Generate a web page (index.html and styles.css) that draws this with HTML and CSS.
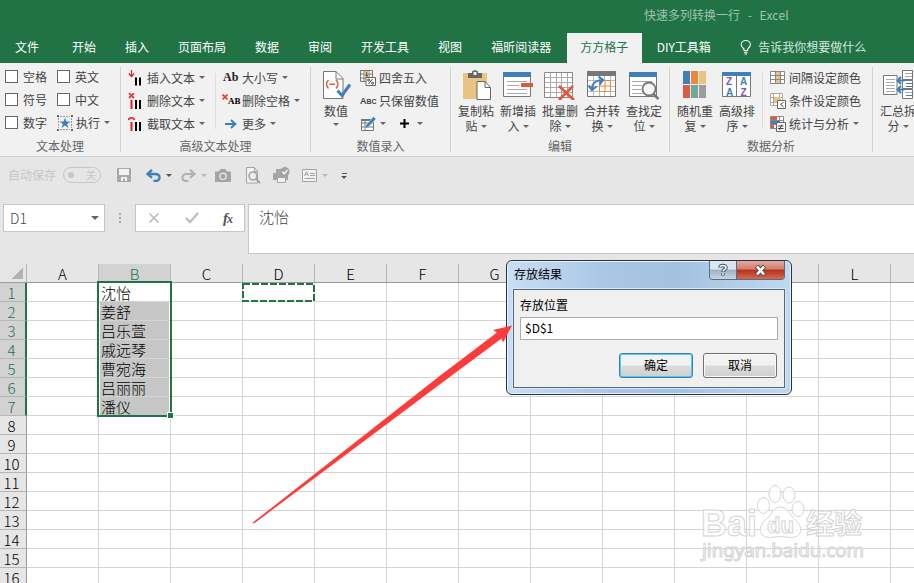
FILE: index.html
```html
<!DOCTYPE html>
<html lang="zh-CN">
<head>
<meta charset="utf-8">
<title>快速多列转换一行 - Excel</title>
<link rel="stylesheet" href="styles.css">
</head>
<body>
<div class="app">
  <header class="title">快速多列转换一行 - <span>Excel</span></header>
  <nav class="tabs">
    <a class="file">文件</a><a>开始</a><a>插入</a><a>页面布局</a><a>数据</a><a>审阅</a><a>开发工具</a><a>视图</a><a>福昕阅读器</a><a class="on">方方格子</a><a>DIY工具箱</a>
    <span class="tell"><svg width="12" height="15" viewBox="0 0 12 15" fill="none" stroke="#fff" stroke-width="1.1"><path d="M4 10.5V9C2 7.500 1.200 6.500 1.200 4.800a4.600 4.300 0 0 1 9.200 0C10.400 6.500 9.600 7.500 7.600 9v1.500zM4 12.200h3.600M4.500 14h2.600"/></svg>告诉我你想要做什么</span>
  </nav>

  <section class="ribbon">
    <div class="group g1">
      <div class="body">
        <div class="checks">
          <span><i class="box"></i>空格</span><span><i class="box"></i>英文</span>
          <span><i class="box"></i>符号</span><span><i class="box"></i>中文</span>
          <span><i class="box"></i>数字</span>
          <span class="run"><svg width="16" height="16" viewBox="0 0 16 16"><path d="M3 1.500h10M3 14.500h10M1.500 3v10M14.500 3v10" stroke="#999" stroke-dasharray="2 1"/><path d="M0 0h2v2H0zM14 0h2v2h-2zM0 14h2v2H0zM14 14h2v2h-2z" fill="#666"/><path d="M8 2.800l1.400 3.700 4 .1-3.200 2.400 1.200 3.900L8 10.600l-3.400 2.300 1.200-3.900L2.600 6.600l4-.1z" fill="#4080ba"/></svg>执行<i class="car"></i></span>
        </div>
      </div>
      <div class="name">文本处理</div>
    </div>

    <div class="group g2">
      <div class="body">
        <div class="list wide">
          <span><svg width="16" height="16" viewBox="0 0 16 16"><path d="M3.500 0v6M.8 3.500l2.700 3 2.700-3" stroke="#e81c24" fill="none" stroke-width="1.200"/><path d="M7 7.500h2v8H7zM11 7.500h2v8h-2z"/></svg>插入文本<i class="car"></i></span>
          <span><svg width="16" height="16" viewBox="0 0 16 16"><path d="M1 0l5 5M6 0L1 5" stroke="#e84030" stroke-width="1.800"/><path d="M2.500 7h2v9h-2z" fill="#e81c24"/><path d="M7 7h2v9H7zM11 7h2v9h-2z"/></svg>删除文本<i class="car"></i></span>
          <span><svg width="16" height="16" viewBox="0 0 16 16"><path d="M.5 4C1 1 6 1 6.500 4" stroke="#e81c24" fill="none" stroke-width="1.600"/><path d="M2.500 6h2v9h-2z" fill="#e81c24"/><path d="M7 6h2v9H7zM11 6h2v9h-2z"/></svg>截取文本<i class="car"></i></span>
        </div>
        <div class="list ruled case">
          <span><b class="ab">Ab</b>大小写<i class="car"></i></span>
          <span><b class="ab small"><svg width="6" height="6" viewBox="0 0 6 6"><path d="M.5.500l5 5M5.500.500l-5 5" stroke="#e84030" stroke-width="1.700"/></svg>AB</b>删除空格<i class="car"></i></span>
          <span><svg width="16" height="16" viewBox="0 0 16 16" fill="none" stroke="#4080ba" stroke-width="2"><path d="M2 8h10M8 4l4.300 4L8 12"/></svg>更多<i class="car"></i></span>
        </div>
      </div>
      <div class="name">高级文本处理</div>
    </div>

    <div class="group g3">
      <div class="body">
        <div class="big">
          <svg width="30" height="30" viewBox="0 0 30 30" fill="none"><path d="M2.500 1.500H15l7 7v20H2.500z" fill="#fff" stroke="#777"/><path d="M15 1.500V9h7" stroke="#777"/><path d="M7.500 10c-2.500 2.500-2.500 6 0 8.500M15 10c2.500 2.500 2.500 6 0 8.500M8.500 14.300h5.500" stroke="#e0583e" stroke-width="1.600"/><path d="M16.500 20.500l4.500 5 8-11" stroke="#4080ba" stroke-width="3"/></svg>
          <span>数值</span><i class="car"></i>
        </div>
        <div class="list nums">
          <span><svg width="16" height="16" viewBox="0 0 16 16"><path d="M.5.500h12v11H.5zM.5 4h12M.5 8h12M4 .5v11M9 .5v11" stroke="#777" fill="#fff"/><path d="M4.500 1H9v7H4.500z" fill="#eac282"/><path d="M6.700 2v4M5.200 4.500l1.500 2 1.500-2" stroke="#555" fill="none"/><path d="M6 7.500h9.500v8H6z" fill="#fff" stroke="#666"/><path d="M12.500 9l-4 5" stroke="#444"/><circle cx="8.700" cy="10" r="1" fill="none" stroke="#444"/><circle cx="12.600" cy="13.200" r="1" fill="none" stroke="#444"/></svg>四舍五入</span>
          <span><b class="abc">A<small>BC</small></b>只保留数值</span>
          <span><svg width="16" height="16" viewBox="0 0 16 16"><path d="M1.500 3.500h12v11h-12zM1.500 7h12M1.500 11h12M5 3.500v11" stroke="#777" fill="#fff"/><path d="M1 3h9v2H1z" fill="#777"/><path d="M13.500.5L16 3l-8 8.500-3.500 1.300L6 9z" fill="#4080ba" stroke="#f1f1f1" stroke-width=".5"/></svg><i class="car"></i><svg class="plus" width="9" height="9" viewBox="0 0 9 9"><path d="M0 4.500h9M4.500 0v9" stroke="#000" stroke-width="2"/></svg><i class="car"></i></span>
        </div>
      </div>
      <div class="name">数值录入</div>
    </div>

    <div class="group g4">
      <div class="body">
        <div class="big"><svg width="30" height="30" viewBox="0 0 30 30"><path d="M2 3h24v26H2z" fill="#eac282"/><path d="M7 3h4V1.500Q14 -1 17 1.500V3h4v5H7z" fill="#666"/><path d="M12.500 2h3v3h-3z" fill="#f1f1f1"/><path d="M16 11.500h8l5.500 6v12H16z" fill="#fff" stroke="#666"/><path d="M24 11.500v6h5.500" fill="none" stroke="#666"/></svg><span>复制粘</span><span>贴<i class="car"></i></span></div>
        <div class="big"><svg width="30" height="30" viewBox="0 0 30 30"><path d="M.5 3.500h27v23H.5z" fill="#fff" stroke="#777"/><path d="M0 2h28v5H0z" fill="#4080ba"/><path d="M4 11.500h20M4 15.500h12M4 19.500h20M4 23.500h20" stroke="#aaa"/><path d="M18 13h12v4H18z" fill="#e0583e"/></svg><span>新增插</span><span>入<i class="car"></i></span></div>
        <div class="big"><svg width="32" height="30" viewBox="0 0 32 30"><path d="M.5 2.500h28v25H.5z" fill="#fff" stroke="#888"/><path d="M1 7.500h27M1 12.500h27M1 17.500h27M1 22.500h27M6.500 3v24M12.500 3v24M17.500 3v24M23.500 3v24" stroke="#aaa"/><path d="M15 16l15 14M29 16L15 30" stroke="#e0583e" stroke-width="2.800"/></svg><span>批量删</span><span>除<i class="car"></i></span></div>
        <div class="big"><svg width="30" height="30" viewBox="0 0 30 30"><path d="M.5 1.500h28v25H.5z" fill="#fff" stroke="#777"/><path d="M0 1h29v5H0z" fill="#777"/><path d="M1 10.500h27M1 16.500h27M1 21.500h27M6.500 6v20M12.500 6v20M17.500 6v20M23.500 6v20" stroke="#bbb"/><path d="M12.500 10.500h11v11h-11zM12.500 16h11M18 10.500v11" fill="#fff" stroke="#e58a3c"/><path d="M5 19C5 13 8 10.500 15 10M11.500 6.500l4.500 3.500-3.500 4.500M1.500 15.500L5 20l4.500-3.500" stroke="#4080ba" stroke-width="2.200" fill="none"/></svg><span>合并转</span><span>换<i class="car"></i></span></div>
        <div class="big"><svg width="30" height="30" viewBox="0 0 30 30"><path d="M.5 3.500h27v23H.5z" fill="#fff" stroke="#777"/><path d="M0 2h28v5H0z" fill="#4080ba"/><path d="M3 11.500h20M3 15.500h10M3 19.500h9M3 23.500h11" stroke="#aaa"/><circle cx="20" cy="19" r="6.500" fill="#f5f5f5" stroke="#777" stroke-width="1.800"/><path d="M24.500 24l5 5" stroke="#777" stroke-width="2.600"/></svg><span>查找定</span><span>位<i class="car"></i></span></div>
      </div>
      <div class="name">编辑</div>
    </div>

    <div class="group g5">
      <div class="body">
        <div class="big"><svg width="24" height="30" viewBox="0 0 24 30"><path d="M0 1h7v13H0z" fill="#4080ba"/><path d="M8 1h7v13H8z" fill="#e58a3c"/><path d="M16 1h7v13h-7z" fill="#eac282"/><path d="M0 15h7v13H0z" fill="#d95c45"/><path d="M8 15h7v13H8z" fill="#73a695"/><path d="M16 15h7v13h-7z" fill="#9c9c9c"/></svg><span>随机重</span><span>复<i class="car"></i></span></div>
        <div class="big"><svg width="30" height="30" viewBox="0 0 30 30"><path d="M.5 3.500h28v23H.5zM14.500 6v21" fill="#fff" stroke="#777"/><path d="M0 2h29v4H0z" fill="#4080ba"/><g class="az"><text x="4" y="15" fill="#8356a8">Z</text><text x="18" y="15" fill="#4080ba">A</text><text x="4" y="25.500" fill="#4080ba">A</text><text x="18.500" y="25.500" fill="#8356a8">Z</text></g></svg><span>高级排</span><span>序<i class="car"></i></span></div>
        <div class="list ruled analyze">
          <span><svg width="16" height="16" viewBox="0 0 16 16"><path d="M.5 1.500h14v12H.5z" fill="#fff"/><path d="M5 2h5v3.500H5zM5 9.500h5V13H5zM5 5.500h5v4H5z" fill="#eac282"/><path d="M.5 1.500h14v12H.5zM.5 5.500h14M.5 9.500h14M5.500 1.500v12M10.500 1.500v12" stroke="#888" fill="none"/></svg>间隔设定颜色</span>
          <span><svg width="16" height="16" viewBox="0 0 16 16"><path d="M.5.500h12v12H.5zM.5 4.500h12M.5 9.500h12M3.500.500v12M9.500.500v12" stroke="#aaa" fill="#fff"/><path d="M4 4h7v5.500H4z" fill="#eac282"/><path d="M7.500 7.500h8v8h-8z" fill="#fff" stroke="#666"/><path d="M13.500 9.300L10.500 11.500l3 2.200" stroke="#444" fill="none"/></svg>条件设定颜色</span>
          <span><svg width="16" height="16" viewBox="0 0 16 16"><path d="M.5.500h13v12H.5zM.5 4.500h13M.5 8.500h13M9.500.500v12" stroke="#888" fill="#fff"/><path d="M1 1h6v3H1zM1 9h3v3H1z" fill="#e0583e"/><path d="M1 5h9v3H1z" fill="#4080ba"/><path d="M6.500 6.500h9v9h-9z" fill="#fff" stroke="#666"/><path d="M8 10h5.500M8 12.500h5.500M12 8.500l-2.500 5.500" stroke="#444"/></svg>统计与分析<i class="car"></i></span>
        </div>
      </div>
      <div class="name">数据分析</div>
    </div>

    <div class="group g6">
      <div class="body">
        <div class="big"><svg width="30" height="30" viewBox="0 0 30 30"><path d="M.5 5.500H14v19H.5zM19.500.5h10v9h-10zM19.500 10.500h10v8h-10zM19.500 19.500h10v9h-10z" fill="#fff" stroke="#777"/><path d="M3 9.500h9M3 12.500h9M3 15.500h9M3 18.500h9M3 21.500h9M22 3.500h7M22 6.500h7M22 22.500h7" stroke="#aaa"/><path d="M23 13.500h6M23 16.500h6M23 25.500h6" stroke="#4080ba"/><path d="M14.500 10.500h7M18 7l-3.500 3.500L18 14M14.500 19.500h7M18 16l-3.500 3.500L18 23" stroke="#4080ba" stroke-width="2" fill="none"/></svg><span>汇总拆</span><span>分<i class="car"></i></span></div>
      </div>
    </div>
  </section>

  <section class="qat">
    <span class="auto">自动保存</span><span class="toggle"><i></i>关</span>
    <svg class="save" width="14" height="14" viewBox="0 0 14 14"><path d="M0 0h14v14H0z" fill="#a9a7aa"/><path d="M2 1h10v6H2zM4 9h6v4H8v-2.500H6V13H4z" fill="#f3f1f4"/></svg>
    <svg class="undo" width="15" height="13" viewBox="0 0 15 13" fill="none" stroke="#4080ba" stroke-width="2.300"><path d="M6 .8L1.500 5 6 8.800M2 5h7c6 0 6 7 .5 7H7.500"/></svg><i class="car dark"></i>
    <svg class="redo" width="15" height="13" viewBox="0 0 15 13" fill="none" stroke="#b0b0b0" stroke-width="2.100"><path d="M9 .8L13.500 5 9 8.800M13 5H6c-6 0-6 7-.5 7h2"/></svg><i class="car pale"></i>
    <svg class="camera" width="16" height="13" viewBox="0 0 16 13"><path d="M0 2.500h4L5.500 0h5L12 2.500h4V13H0z" fill="#a5a3a6"/><circle cx="8" cy="7.300" r="3.200" fill="none" stroke="#eee" stroke-width="1.200"/></svg>
    <svg class="preview" width="15" height="17" viewBox="0 0 15 17" fill="none" stroke="#a5a3a6"><path d="M.5.500h8l3 3.500v12H.5z" fill="#f3f1f4"/><path d="M8.500.500v4h3"/><circle cx="7" cy="9" r="4" fill="#eee" stroke-width="1.600"/><path d="M10 12l4 4" stroke-width="2"/></svg>
    <svg class="print" width="17" height="16" viewBox="0 0 17 16"><path d="M0 6h15v7H0zM3 2h6v4H3z" fill="#a5a3a6"/><path d="M4.500 10.500h8v5h-8z" fill="#f3f1f4" stroke="#a5a3a6"/><circle cx="11.800" cy="4.800" r="4.800" fill="#a5a3a6"/><path d="M9.300 4.800l2 2 3.200-4" fill="none" stroke="#fff" stroke-width="1.300"/></svg>
    <svg class="form" width="15" height="13" viewBox="0 0 15 13"><path d="M.5.500h14v12H.5z" fill="#f3f1f4" stroke="#a5a3a6"/><path d="M2.500 7l2-4.500 2 4.500M3.300 5.500h2.400M8 4.500h5M8 6.500h5M2.500 9.500h10.500" fill="none" stroke="#a5a3a6"/></svg><i class="car pale"></i>
    <span class="more"><i class="car dark"></i></span>
  </section>

  <section class="formula">
    <div class="namebox">D1<i class="car"></i></div>
    <div class="dots"><i></i><i></i><i></i></div>
    <div class="fxbox">
      <svg width="12" height="12" viewBox="0 0 12 12"><path d="M1.500 1.500l9 9M10.500 1.500l-9 9" stroke="#bcbcbc" stroke-width="1.700"/></svg>
      <svg width="14" height="12" viewBox="0 0 14 12"><path d="M1 6l4 4.200L13 1" stroke="#bcbcbc" stroke-width="2.200" fill="none"/></svg>
      <em>f<small>x</small></em>
    </div>
    <div class="input">沈怡</div>
  </section>

  <main class="sheet">
    <div class="row head"><b class="corner"></b><b>A</b><b class="sel">B</b><b>C</b><b>D</b><b>E</b><b>F</b><b>G</b><b>H</b><b>I</b><b>J</b><b>K</b><b>L</b><b></b></div>
    <div class="row on"><b>1</b><span class="first">沈怡</span></div>
    <div class="row on"><b>2</b><span>姜舒</span></div>
    <div class="row on"><b>3</b><span>吕乐萱</span></div>
    <div class="row on"><b>4</b><span>戚远琴</span></div>
    <div class="row on"><b>5</b><span>曹宛海</span></div>
    <div class="row on"><b>6</b><span>吕丽丽</span></div>
    <div class="row on"><b>7</b><span>潘仪</span></div>
    <div class="row"><b>8</b></div>
    <div class="row"><b>9</b></div>
    <div class="row"><b>10</b></div>
    <div class="row"><b>11</b></div>
    <div class="row"><b>12</b></div>
    <div class="row"><b>13</b></div>
    <div class="row"><b>14</b></div>
    <div class="row"><b>15</b></div>
    <div class="row"><b>16</b></div>
    <div class="selection"><i></i></div>
    <svg class="ants" width="73" height="19" viewBox="0 0 73 19"><rect x="1" y="1" width="71" height="17" fill="none" stroke="#217346" stroke-width="2" stroke-dasharray="7 2"/></svg>
  </main>

  <svg class="watermark" width="170" height="85" viewBox="0 0 170 85" fill="#fff" fill-opacity=".75" stroke="#d4d4d4" stroke-width="1">
    <ellipse cx="66.500" cy="25.500" rx="6" ry="8"/><ellipse cx="78" cy="14" rx="6" ry="8.500"/><ellipse cx="92" cy="15" rx="6" ry="8"/><ellipse cx="101" cy="29" rx="6" ry="7.500"/>
    <path d="M83.500 27c7 0 9 8 15 13 8 7 7 17-4 17.500-5 0-7-1-11-1s-7 1-11 1c-11-.5-12-10.500-4-17.500 6-5 8-13 15-13z"/>
    <text x="4" y="56" class="wm-logo" textLength="56" lengthAdjust="spacingAndGlyphs">Bai</text>
    <text x="70" y="53" class="wm-du" textLength="27" lengthAdjust="spacingAndGlyphs">du</text>
    <text x="109" y="54" class="wm-cn">经验</text>
    <text x="5" y="77" class="wm-url" textLength="162" lengthAdjust="spacingAndGlyphs">jingyan.baidu.com</text>
  </svg>

  <div class="dialog">
    <div class="bar">存放结果<span class="caps"><i class="help"><svg width="12" height="14" viewBox="0 0 12 14" fill="none"><path d="M3 4.800C3 1.800 9 1.800 9 4.800 9 6.600 6 6.600 6 9M6 10.500v2" stroke="#46566a" stroke-width="3.600"/><path d="M3 4.300C3 1.800 9 1.800 9 4.800 9 6.600 6 6.600 6 8.500M6 10.500v1.500" stroke="#fff" stroke-width="1.600"/></svg></i><i class="close"><svg width="13" height="11" viewBox="0 0 13 11"><path d="M2.500 1l8 9M10.500 1l-8 9" stroke="#594c58" stroke-width="4.600"/><path d="M3 1.500l7 8M10 1.500l-7 8" stroke="#fff" stroke-width="2.600"/></svg></i></span></div>
    <div class="pane">
      <label>存放位置</label>
      <div class="field">$D$1</div>
      <div class="buttons"><button class="ok">确定</button><button>取消</button></div>
    </div>
  </div>

  <svg class="arrow" width="264" height="202" viewBox="0 0 264 202"><path d="M1.500 200.800L188 54.500 246 10.500 242 8 261 3.500 252 20.500 250.500 16.500 190 61.500 3 201.500z" fill="#fc3c3a"/></svg>
</div>
</body>
</html>
```
FILE: styles.css
```css
* { box-sizing: border-box; }
body { margin: 0; overflow: hidden; font: 12px/16px "Noto Sans CJK SC", sans-serif; color: #444; }
i, em { font-style: normal; }
svg { display: block; flex: none; }
.app { position: relative; width: 914px; height: 583px; overflow: hidden; background: #e6e6e6; }

.title { height: 33px; padding: 7px 0 0 644px; background: #217346; color: #9fc5af; white-space: pre; word-spacing: 5px; }
.title span { letter-spacing: .2px; }
.tabs { display: flex; height: 30px; padding-left: .5px; background: #217346; color: #fff; white-space: nowrap; }
.tabs a { margin: 0 1px; padding: 6px 13.500px 0; }
.tabs .file { margin-right: 5px; }
.tabs .on { background: #f1f1f1; color: #217346; margin: 0 0 0 1px; padding: 6px 14px 0 13.500px; }
.tell { display: flex; gap: 6px; align-items: center; padding: 0 0 2px 15px; color: #d6e7dd; }

.ribbon { display: flex; height: 94px; background: #f1f1f1; border-bottom: 1px solid #d2d2d2; white-space: nowrap; overflow: hidden; }
.group { flex: none; height: 85px; margin-top: 4px; border-right: 1px solid #d2d2d2; }
.group .body { display: flex; height: 71px; }
.name { text-align: center; line-height: 16px; color: #666; }
.g1 { width: 121px; } .g2 { width: 190px; } .g3 { width: 140px; } .g4 { width: 219px; } .g5 { width: 203px; } .g6 { width: 60px; }
.car { flex: none; display: inline-block; width: 0; height: 0; border: 3px solid transparent; border-top-color: #666; border-bottom: 0; }
.checks { display: grid; grid-template-columns: 52px 60px; grid-auto-rows: 23px; padding-left: 5px; margin-top: -2px; }
.checks span, .list span { display: flex; align-items: center; }
.box { width: 13px; height: 13px; border: 1px solid #666; background: #fff; margin-right: 5px; }
.run svg { margin-right: 3px; }
.run .car, .list .car { margin-left: 4px; }
.list { display: grid; grid-auto-rows: 23px; margin-top: -1px; height: 70px; }
.list svg { margin-right: 3px; }
.wide { width: 94px; padding-left: 7px; }
.ruled { border-left: 1px solid #dcdcdc; height: 56px; margin-top: 6px; }
.ruled span { position: relative; top: -7px; }
.case { padding-left: 7px; }
.ab { width: 19px; font: bold 12px "Liberation Serif", serif; color: #222; }
.case .small { display: flex; font-size: 9px; color: #000; }
.small svg { margin: -2px 0 0 -1px; }
.abc { width: 19px; font: bold 9px "Liberation Sans", sans-serif; }
.abc small { font-size: 7px; }
.az { font: bold 10px "Liberation Sans", sans-serif; }
.big { width: 42px; display: flex; flex-direction: column; align-items: center; line-height: 15px; padding-top: 3px; }
.big svg { margin-bottom: 3px; }
.big .car { margin-left: 3px; vertical-align: 3px; }
.g3 .big { margin-left: 5px; width: 40px; }
.g3 .big .car { margin: 5px 0 0; }
.nums { padding-left: 4px; }
.nums .plus { margin: 0 7px 0 14px; }
.nums svg + .car { margin-left: 1px; }
.g4 .body { padding-left: 4px; }
.g5 .body { padding-left: 4px; }
.analyze { margin-left: 4px; padding-left: 7px; }
.g6 .body { padding-left: 4px; }

.qat { display: flex; align-items: center; height: 36px; color: #c6c6c6; }
.auto { margin-left: 8px; }
.toggle { display: flex; align-items: center; justify-content: space-between; width: 38px; height: 16px; margin-left: 7px; padding: 0 4px; border: 1px solid #c8c8c8; border-radius: 8px; font-size: 10px; }
.toggle i { width: 6px; height: 6px; border-radius: 50%; background: #c6c6c6; }
.save { margin-left: 16px; } .undo { margin-left: 15px; } .redo { margin-left: 9px; }
.qat .car { margin-left: 5px; }
.car.dark { border-top-color: #555; } .car.pale { border-top-color: #b8b8b8; }
.camera { margin-left: 8px; } .preview { margin-left: 15px; } .print { margin-left: 12px; } .form { margin-left: 12px; }
.qat .more { margin-left: 14px; padding-top: 2px; border-top: 1px solid #555; height: 6px; width: 5px; margin-top: 1px; }
.qat .more .car { margin: 0 0 0 -1px; display: block; }

.formula { display: flex; height: 71px; padding: 11px 0 0 3px; }
.namebox, .fxbox { height: 28px; border: 1px solid #c6c6c6; background: #fff; display: flex; align-items: center; }
.namebox { width: 102px; justify-content: space-between; padding: 0 5px 1px 6px; font-size: 14px; font-weight: 300; }
.namebox .car { border-width: 4px 4px 0; }
.dots { width: 30px; height: 28px; display: flex; flex-direction: column; gap: 2px; align-items: center; justify-content: center; }
.dots i { width: 2px; height: 2px; background: #aaa; }
.fxbox { width: 110px; padding: 0 12px; justify-content: space-between; }
.fxbox em { font: italic bold 15px "Liberation Serif", serif; color: #555; letter-spacing: -1px; }
.fxbox small { font-size: 12px; }
.input { flex: 1; height: 50px; margin-left: 3px; padding: 3px 10px; background: #fff; border: 1px solid #c6c6c6; border-right: 0; font-size: 15px; font-weight: 300; line-height: 17px; }

.sheet { position: relative; height: 319px; background: #fff; font-size: 15px; font-weight: 300; color: #000; }
.row { display: grid; grid-template-columns: 27px 72px 72px; height: 19px; border-bottom: 1px solid #d4d4d4; background: repeating-linear-gradient(90deg, transparent 0 71px, #d4d4d4 71px 72px) 27px 0 no-repeat; }
.row b { font-weight: 300; line-height: 20px; text-align: center; background: #e6e6e6; border-right: 1px solid #9b9b9b; padding-right: 3px; height: 19px; border-bottom: 1px solid #b5b5b5; }
.row.on b { background: #d2d2d2; color: #217346; border-right: 2px solid #217346; padding-right: 2px; }
.row span { grid-column: 3; background: #c6c6c6; margin: 0 2px 0 1px; padding-left: 1px; line-height: 20px; height: 18px; }
.row .first { background: #fff; }
.row.head { grid-template-columns: 27px repeat(13, 72px); background: #e6e6e6; border-bottom: 1px solid #9b9b9b; }
.head b { border-right-color: #b5b5b5; border-bottom: 0; height: 18px; padding: 0; line-height: 19px; }
.head .sel { background: #d2d2d2; color: #217346; }
.head .corner { background: linear-gradient(135deg, transparent 50%, #b1b1b1 50%) 12px 4px / 11px 11px no-repeat; }
.selection { position: absolute; left: 97px; top: 17px; width: 75px; height: 136px; border: 2px solid #217346; }
.selection i { position: absolute; right: -3px; bottom: -3px; width: 5px; height: 5px; background: #217346; box-shadow: 0 0 0 1px #fff; }
.ants { position: absolute; left: 242px; top: 19px; }

.watermark { position: absolute; left: 697px; top: 480px; }
.wm-logo { font: bold 37px "Liberation Sans", sans-serif; }
.wm-du { font: bold 22px "Liberation Sans", sans-serif; }
.wm-cn { font: bold 28px "Noto Sans CJK SC", sans-serif; }
.wm-url { font: 18px "Noto Sans", sans-serif; }

.dialog { position: absolute; left: 506px; top: 260px; width: 286px; height: 135px; border: 1px solid #29333e; border-radius: 6px; color: #000; background: linear-gradient(90deg, #c9def6, #a9c6e4 35%, #a3c2df 60%, #c0d9f2); box-shadow: inset 0 0 0 1px #e6f2fd; padding: 0 6px; }
.bar { height: 28px; display: flex; justify-content: space-between; line-height: 25px; padding-left: 1px; }
.caps { display: flex; height: 19px; border: 1px solid #596c80; border-top: 0; border-radius: 0 0 4px 4px; overflow: hidden; }
.caps i { display: flex; align-items: center; justify-content: center; }
.help { width: 27px; background: linear-gradient(#dce6f0 45%, #9eb1c7 50%, #c5d6e8); border-right: 1px solid #596c80; }
.close { width: 47px; background: linear-gradient(#e5a79a, #d1806f 45%, #b9301b 50%, #d36a4c); }
.pane { height: 99px; border: 1px solid #56677a; outline: 1px solid #d8e9fa; background: #f0f0f0; padding: 7px 6px; }
.pane label { display: block; line-height: 16px; height: 17px; }
.field { height: 23px; margin-top: 3px; border: 1px solid #abadb3; background: #fff; padding-left: 4px; line-height: 19px; }
.buttons { display: flex; justify-content: flex-end; gap: 10px; margin: 13px 1px 0 0; }
.buttons button { width: 74px; height: 25px; padding: 0 0 1px; border: 1px solid #707070; border-radius: 3px; background: linear-gradient(#f2f2f2 48%, #dcdcdc 52%, #cfcfcf); box-shadow: inset 0 0 0 1px #fafafa; font: inherit; color: #000; }
.buttons .ok { border-color: #3c7fb1; box-shadow: inset 0 0 0 1px #46d0f5; }
.arrow { position: absolute; left: 251px; top: 322px; }
```
